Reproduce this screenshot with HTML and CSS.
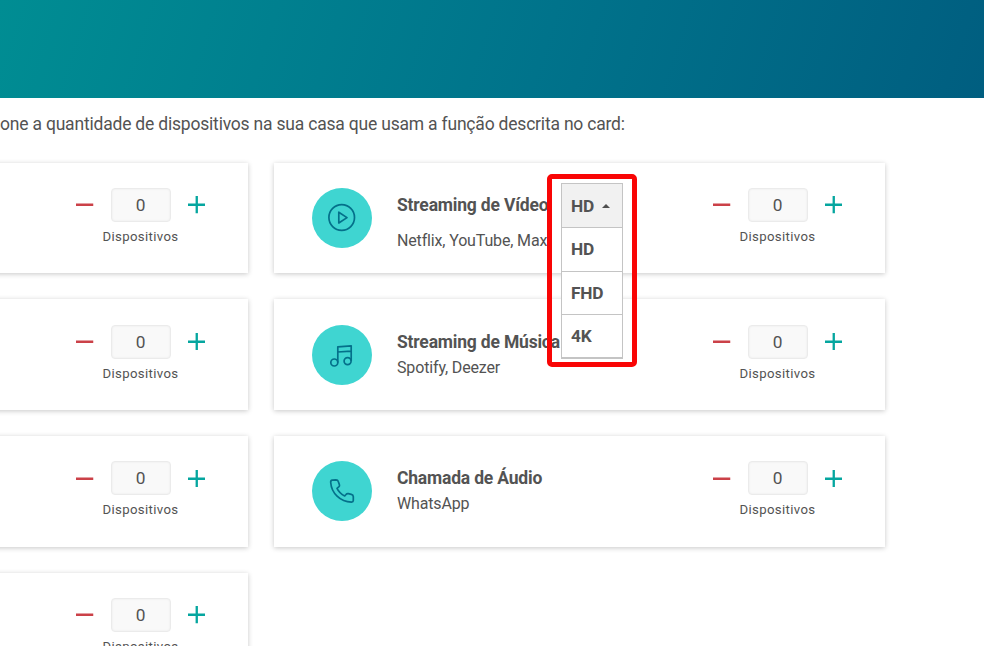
FILE: index.html
```html
<!DOCTYPE html>
<html lang="pt-BR">
<head>
<meta charset="utf-8">
<title>Dispositivos</title>
<link rel="stylesheet" href="styles.css">
</head>
<body>
<svg class="symbols" width="0" height="0">
  <symbol id="minus" viewBox="0 0 18 18"><path d="M0 9H18"/></symbol>
  <symbol id="plus" viewBox="0 0 18 18"><path d="M0 9H18M9 0V18"/></symbol>
</svg>
<header class="hero"></header>
<main class="content">
  <p class="intro">one a quantidade de dispositivos na sua casa que usam a função descrita no card:</p>
  <div class="cards">
    <section class="card">
      <div class="stepper">
        <div class="controls"><svg class="minus"><use href="#minus"/></svg><span class="count">0</span><svg class="plus"><use href="#plus"/></svg></div>
        <span class="unit">Dispositivos</span>
      </div>
    </section>
    <section class="card">
      <div class="badge"><svg viewBox="0 0 60 60"><circle cx="29.7" cy="29.5" r="12.8"/><path d="M26.8 24.2V35L35 29.6Z"/></svg></div>
      <div class="info spaced">
        <div class="heading">
          <h2>Streaming de Vídeo</h2>
          <div class="select">
            <div class="option current">HD <i class="caret"></i></div>
            <div class="option">HD</div>
            <div class="option">FHD</div>
            <div class="option">4K</div>
          </div>
        </div>
        <p>Netflix, YouTube, Max</p>
      </div>
      <div class="stepper">
        <div class="controls"><svg class="minus"><use href="#minus"/></svg><span class="count">0</span><svg class="plus"><use href="#plus"/></svg></div>
        <span class="unit">Dispositivos</span>
      </div>
    </section>
    <section class="card">
      <div class="stepper">
        <div class="controls"><svg class="minus"><use href="#minus"/></svg><span class="count">0</span><svg class="plus"><use href="#plus"/></svg></div>
        <span class="unit">Dispositivos</span>
      </div>
    </section>
    <section class="card">
      <div class="badge"><svg viewBox="0 0 60 60"><circle cx="22.3" cy="37.5" r="3.5"/><circle cx="35.6" cy="36.1" r="3.5"/><path d="M25.8 37.5V21.8L39.2 20.9V36.1M25.8 27L39.2 26.1"/></svg></div>
      <div class="info">
        <h2>Streaming de Música</h2>
        <p>Spotify, Deezer</p>
      </div>
      <div class="stepper">
        <div class="controls"><svg class="minus"><use href="#minus"/></svg><span class="count">0</span><svg class="plus"><use href="#plus"/></svg></div>
        <span class="unit">Dispositivos</span>
      </div>
    </section>
    <section class="card">
      <div class="stepper">
        <div class="controls"><svg class="minus"><use href="#minus"/></svg><span class="count">0</span><svg class="plus"><use href="#plus"/></svg></div>
        <span class="unit">Dispositivos</span>
      </div>
    </section>
    <section class="card">
      <div class="badge"><svg viewBox="0 0 60 60"><path d="M20.2 19.1Q18.5 19.3 18.7 21.5C19.5 32 28 41 39.5 41.2Q41.3 41.1 41.3 39.5V35.6Q41.2 33.7 39.3 33.3L36.3 32.7Q34.8 32.5 34 33.5L32.7 35C29.5 33.5 26.7 30.8 25 27.4L27 25.7Q27.8 24.9 27.4 23.7L26.3 20.5Q25.8 18.9 24 18.9Z"/></svg></div>
      <div class="info">
        <h2>Chamada de Áudio</h2>
        <p>WhatsApp</p>
      </div>
      <div class="stepper">
        <div class="controls"><svg class="minus"><use href="#minus"/></svg><span class="count">0</span><svg class="plus"><use href="#plus"/></svg></div>
        <span class="unit">Dispositivos</span>
      </div>
    </section>
    <section class="card">
      <div class="stepper">
        <div class="controls"><svg class="minus"><use href="#minus"/></svg><span class="count">0</span><svg class="plus"><use href="#plus"/></svg></div>
        <span class="unit">Dispositivos</span>
      </div>
    </section>
  </div>
</main>
<div class="highlight"></div>
</body>
</html>
```
FILE: styles.css
```css
* { box-sizing: border-box; }
body {
  margin: 0;
  height: 646px;
  position: relative;
  overflow: hidden;
  background: #fff;
  color: #535353;
  font-family: Roboto, sans-serif;
}
.symbols { position: absolute; }
.hero {
  height: 98px;
  background: linear-gradient(108deg, #008d93 0%, #00738b 55%, #005e80 100%);
}
.intro {
  margin: 0;
  padding-top: 15px;
  height: 64.5px;
  font-size: 17.5px;
  letter-spacing: -.2px;
  line-height: 22px;
  white-space: nowrap;
}
.cards {
  display: grid;
  grid-template-columns: 611.5px 611.5px;
  grid-auto-rows: 110.7px;
  gap: 26px 25.5px;
  margin-left: -363.5px;
}
.card {
  display: flex;
  align-items: flex-start;
  padding: 25.5px 42.5px 0 38.5px;
  background: #fff;
  box-shadow: 0 1px 5px rgba(0, 0, 0, .22);
}
.badge {
  width: 60px;
  height: 60px;
  border-radius: 50%;
  background: #3fd5d1;
}
.badge svg {
  display: block;
  width: 60px;
  height: 60px;
  fill: none;
  stroke: #04708a;
  stroke-width: 1.7;
  stroke-linejoin: round;
}
.info { margin: 5px 0 0 25px; }
.heading { display: flex; position: relative; }
h2 {
  margin: 0;
  font-size: 17.5px;
  letter-spacing: -.19px;
  line-height: 25px;
  font-weight: 700;
  white-space: nowrap;
}
.info p {
  margin: 0;
  font-size: 16px;
  letter-spacing: -.15px;
  line-height: 25px;
}
.spaced p { margin-top: 10px; }
.select {
  position: absolute;
  z-index: 2;
  left: 163.5px;
  top: -10px;
  width: 62px;
  border: 1px solid #c4c4c4;
  border-bottom-width: 2px;
  background: #fff;
}
.option {
  display: flex;
  align-items: center;
  height: 43.7px;
  padding-left: 9.5px;
  font-size: 17.3px;
  letter-spacing: -.2px;
  font-weight: 700;
}
.option + .option { border-top: 1px solid #c4c4c4; }
.option.current { height: 43px; background: #f1f1f1; }
.option:last-child { height: 43px; }
.caret {
  margin-left: 8px;
  border: 4px solid transparent;
  border-top: 0;
  border-bottom-color: #4f4f4f;
}
.stepper {
  width: 130px;
  margin-left: auto;
  display: flex;
  flex-direction: column;
  align-items: center;
}
.controls {
  display: flex;
  align-items: center;
  gap: 17px;
}
.controls svg {
  width: 17.5px;
  height: 17.5px;
  fill: none;
  stroke-width: 2.4;
}
.minus { stroke: #cb4148; }
.plus { stroke: #05a69f; }
.count {
  width: 60px;
  height: 34px;
  border: 1px solid #ebebeb;
  border-radius: 4px;
  background: #f9f9f9;
  box-shadow: inset 0 0 2px #e8e8e8;
  font-size: 17.3px;
  line-height: 33px;
  text-align: center;
}
.unit {
  margin-top: 6px;
  font-size: 13.2px;
  line-height: 18px;
  letter-spacing: .35px;
}
.highlight {
  position: absolute;
  z-index: 3;
  left: 547px;
  top: 174px;
  width: 90px;
  height: 193px;
  border: 5px solid #f90505;
  border-radius: 5px;
}
```
